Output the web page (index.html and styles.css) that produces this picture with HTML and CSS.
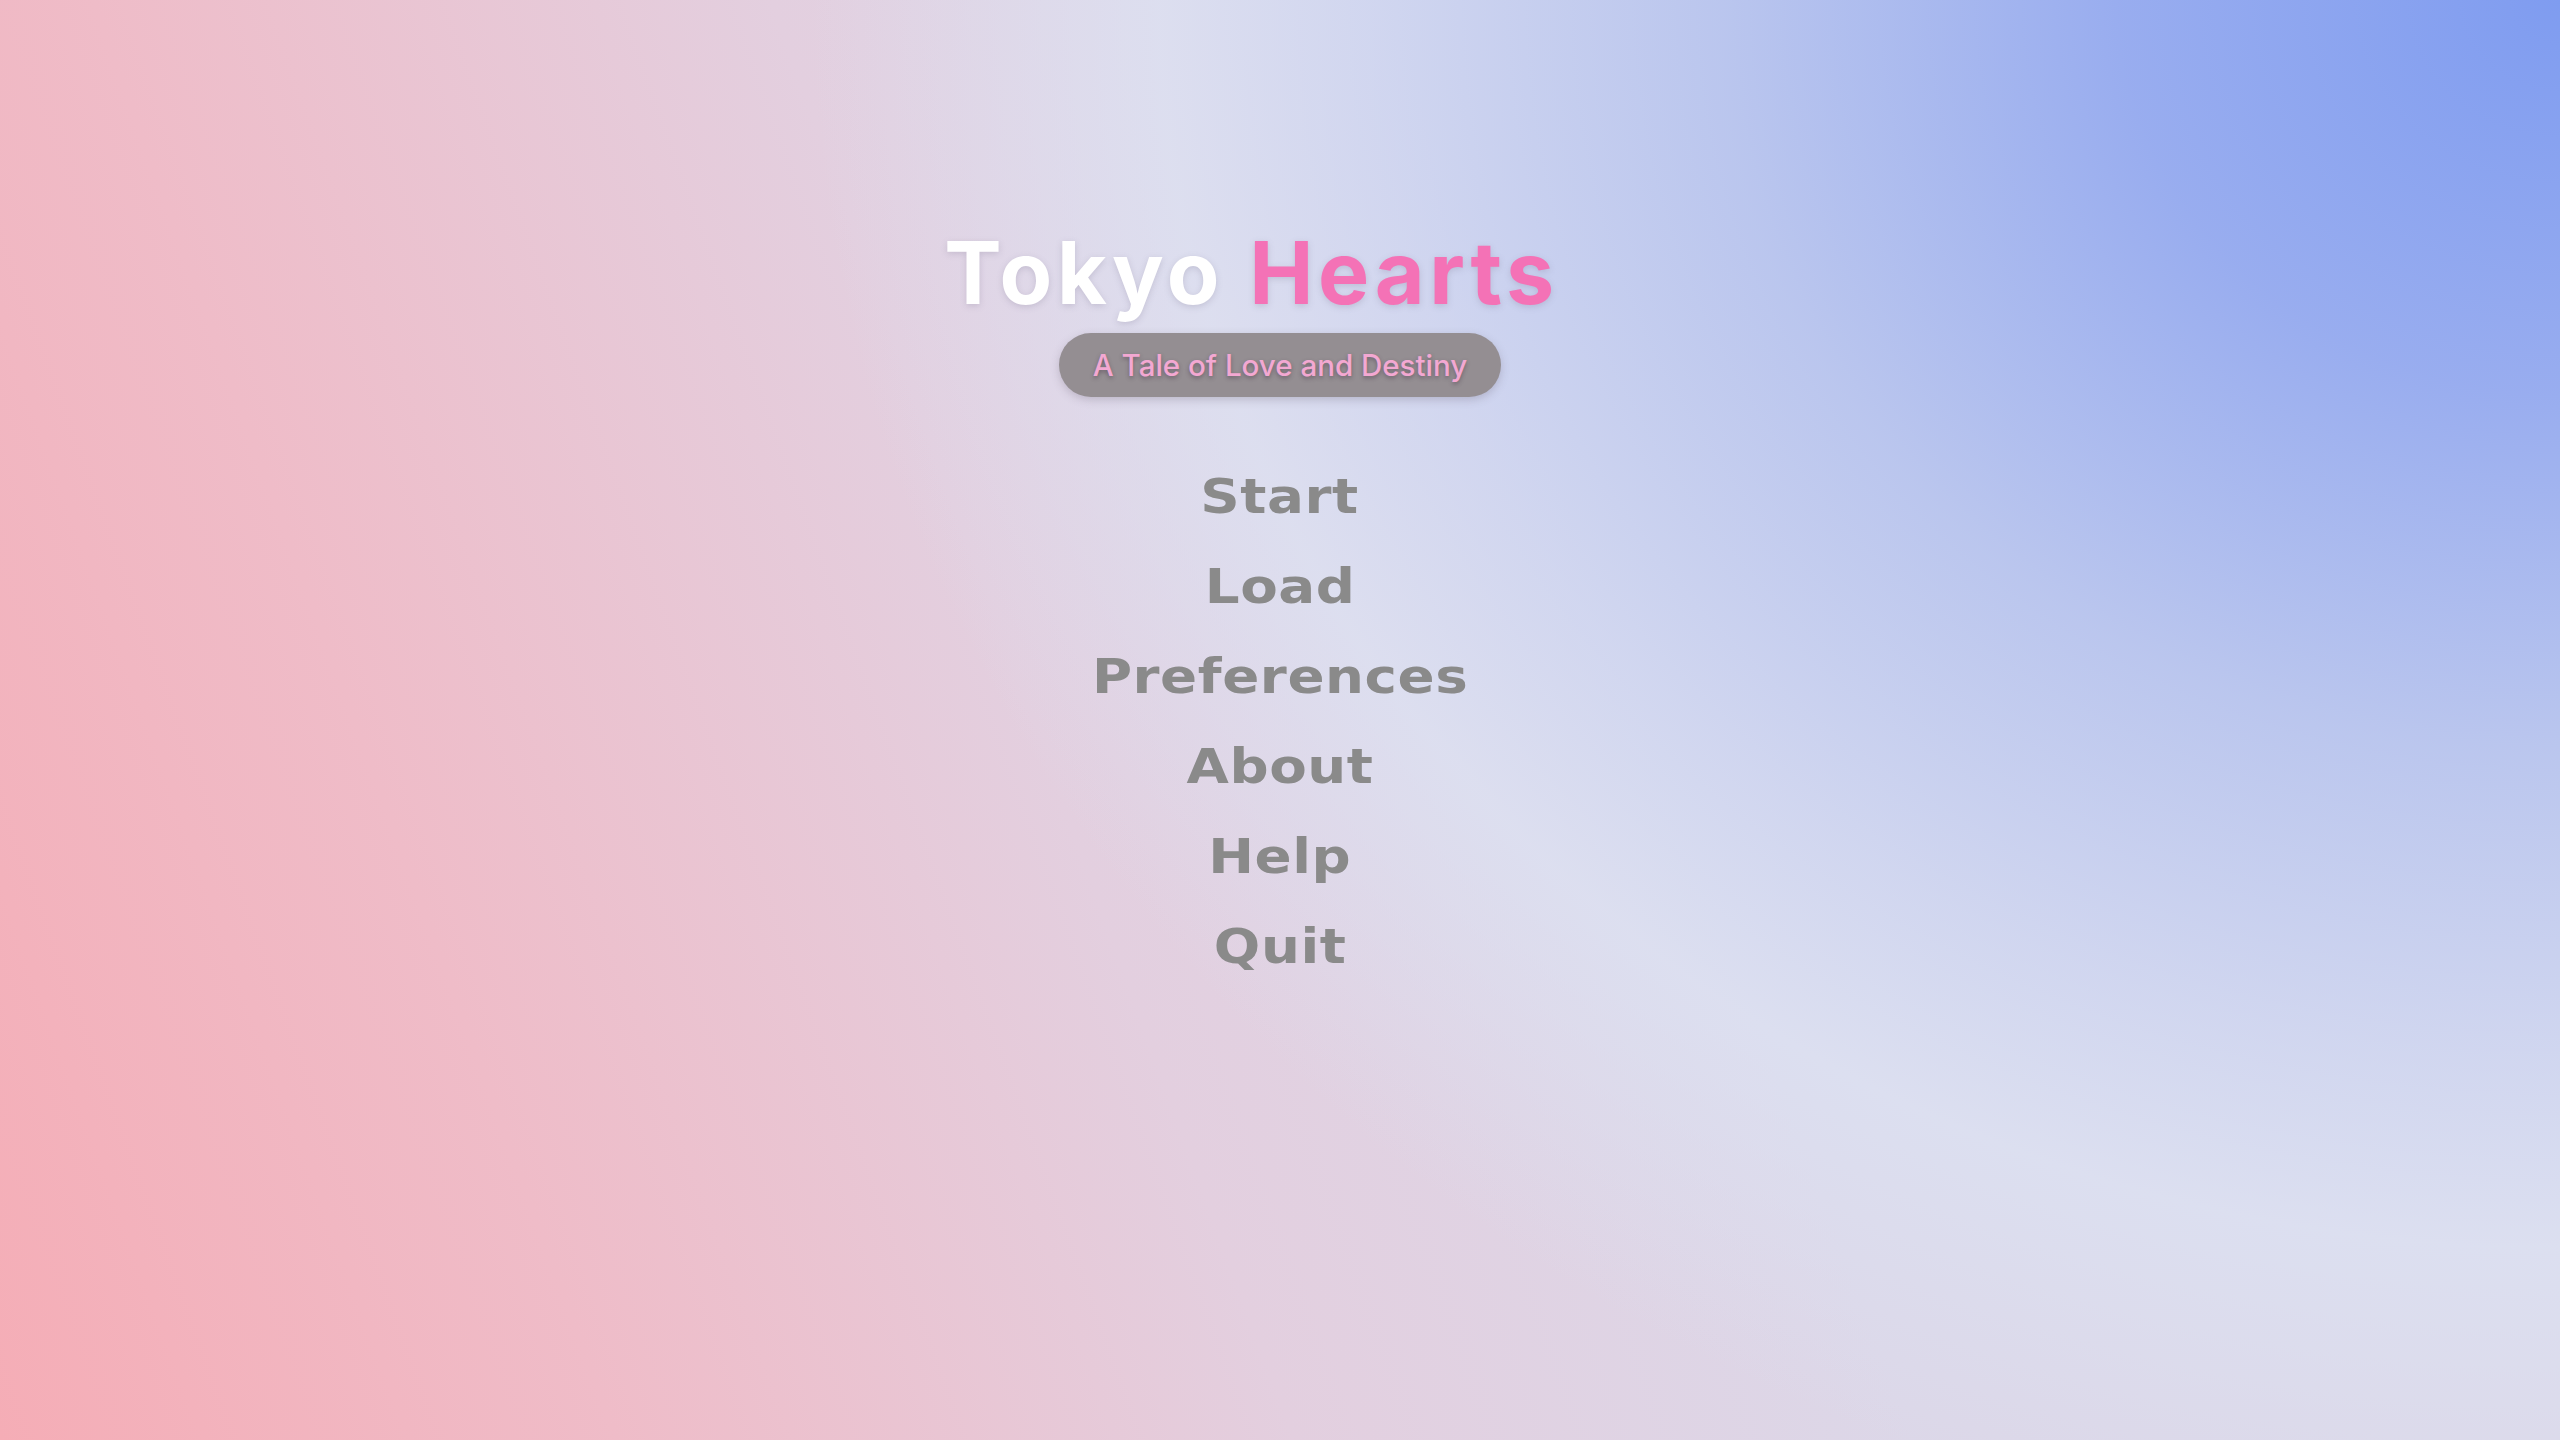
FILE: index.html
```html
<!DOCTYPE html>
<html lang="en">
<head>
<meta charset="utf-8">
<title>Tokyo Hearts</title>
<link rel="stylesheet" href="styles.css">
</head>
<body>
<main class="screen">
  <header class="brand">
    <h1 class="title"><span class="title-a">Tokyo</span> <span class="title-b">Hearts</span></h1>
    <p class="tagline">A Tale of Love and Destiny</p>
  </header>
  <nav class="menu">
    <a class="menu-item">Start</a>
    <a class="menu-item">Load</a>
    <a class="menu-item">Preferences</a>
    <a class="menu-item">About</a>
    <a class="menu-item">Help</a>
    <a class="menu-item">Quit</a>
  </nav>
</main>
</body>
</html>
```
FILE: styles.css
```css
html, body {
  margin: 0;
  padding: 0;
  height: 100%;
}

body {
  font-family: Inter, "Noto Sans", sans-serif;
  background:
    radial-gradient(ellipse 1750px 1560px at 100% 0%,
      rgba(127,156,240,1) 0%,
      rgba(145,168,240,0.9) 25%,
      rgba(175,192,240,0.75) 48%,
      rgba(205,214,242,0.75) 68%,
      rgba(220,225,242,0.8) 80%,
      rgba(220,225,242,0) 100%),
    linear-gradient(70deg,
      #f5adb6 0%,
      #efbcc8 20%,
      #e3cfdf 42%,
      #dcd7e8 62%,
      #dcd8e8 100%);
  overflow: hidden;
}

.screen {
  height: 100vh;
  display: flex;
  flex-direction: column;
  align-items: center;
  padding-top: 230px;
  box-sizing: border-box;
}

.brand {
  display: flex;
  flex-direction: column;
  align-items: center;
}

.title {
  margin: 0 57px 0 0;
  font-family: Inter, sans-serif;
  font-weight: 700;
  font-size: 86px;
  line-height: 1;
  letter-spacing: 4.6px;
  text-shadow: 0 2px 6px rgba(120, 110, 140, 0.25);
}

.title-a {
  color: #ffffff;
}

.title-b {
  color: #f472b6;
}

.tagline {
  margin: 17px 0 0 0;
  padding: 15px 34px;
  border-radius: 32px;
  background: #948e92;
  box-shadow: 0 3px 8px rgba(90, 80, 100, 0.25);
  color: #f3a8d2;
  font-family: Inter, sans-serif;
  font-weight: 500;
  font-size: 29.5px;
  line-height: 34px;
  text-shadow: 0 2px 4px rgba(60, 40, 60, 0.45);
}

.menu {
  margin-top: 54px;
  display: flex;
  flex-direction: column;
  align-items: center;
}

.menu-item {
  display: block;
  font-family: "DejaVu Sans", sans-serif;
  font-weight: 700;
  font-size: 48px;
  line-height: 90px;
  letter-spacing: 0.5px;
  transform: scaleX(1.14);
  color: #8a8a8a;
  text-decoration: none;
  cursor: pointer;
}
```
